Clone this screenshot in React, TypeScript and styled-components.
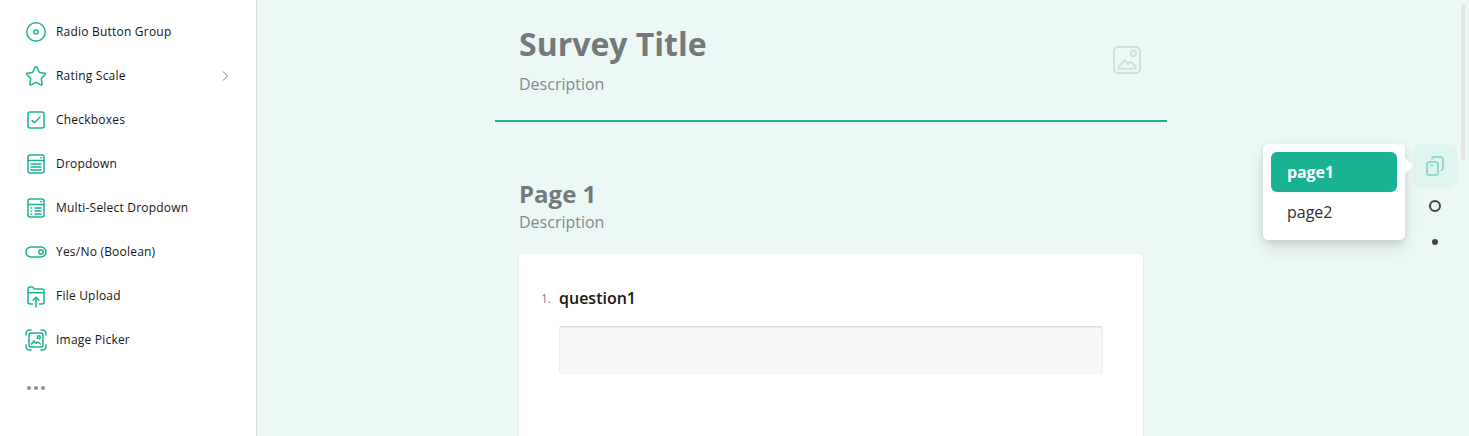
import React from "react";
import styled, { createGlobalStyle } from "styled-components";

const GlobalStyle = createGlobalStyle`
  * { box-sizing: border-box; }
  html, body { margin: 0; height: 100%; overflow: hidden; }
  body { font-family: "Open Sans", "Noto Sans", sans-serif; }
`;

const Layout = styled.div`
  display: flex;
  height: 436px;
  overflow: hidden;
  background: #ebf8f6;
`;

const Toolbox = styled.aside`
  flex: none;
  width: 257px;
  padding: 12px 20px 0 20px;
  background: #fff;
  border-right: 1px solid #d6dedd;
`;

const ToolItem = styled.div`
  display: flex;
  align-items: center;
  height: 40px;
  margin-bottom: 4px;
  padding: 0 3px 0 4px;
`;

const ToolIcon = styled.svg`
  flex: none;
  width: 24px;
  height: 24px;
  fill: none;
  stroke: #19b394;
  stroke-width: 1.5;
  stroke-linecap: round;
  stroke-linejoin: round;
`;

const ToolLabel = styled.span`
  flex: 1;
  margin-left: 8px;
  font-size: 12px;
  line-height: 16px;
  letter-spacing: 0.21px;
  color: #161616;
`;

const Chevron = styled.svg`
  width: 16px;
  height: 16px;
  fill: none;
  stroke: #808080;
`;

const MoreButton = styled.div`
  display: flex;
  gap: 3px;
  padding: 22px 7px 10px;
`;

const MoreDot = styled.i`
  width: 4px;
  height: 4px;
  border-radius: 50%;
  background: #909090;
`;

const Designer = styled.main`
  flex: 1;
  display: flex;
  flex-direction: column;
  align-items: center;
`;

const SurveyHeader = styled.header`
  display: flex;
  justify-content: space-between;
  flex: none;
  width: 672px;
  height: 122px;
  padding: 22px 24px 0;
  border-bottom: 2px solid #19b394;
`;

const SurveyTitle = styled.h1`
  margin: 0;
  font-size: 32px;
  line-height: 44px;
  font-weight: 700;
  color: #747a79;
`;

const Description = styled.p`
  margin: 0;
  font-size: 16px;
  line-height: 24px;
  font-weight: 400;
  color: #848b8a;
`;

const HeaderDescription = styled(Description)`
  margin-top: 6px;
`;

const LogoPlaceholder = styled.svg`
  width: 32px;
  height: 32px;
  margin-top: 22px;
  fill: none;
  stroke: #d3dfdd;
  stroke-width: 2;
  stroke-linejoin: round;
`;

const SurveyPage = styled.section`
  width: 624px;
  padding-top: 56px;
`;

const PageTitle = styled.h2`
  margin: 0;
  font-size: 24px;
  line-height: 32px;
  font-weight: 700;
  color: #747a79;
`;

const QuestionCard = styled.article`
  height: 240px;
  margin-top: 20px;
  padding: 32px 40px 0 22px;
  background: #fff;
  border-radius: 4px;
  box-shadow: 0 1px 2px rgba(0, 0, 0, 0.15);
`;

const QuestionTitle = styled.div`
  display: flex;
  align-items: center;
  height: 24px;
`;

const QuestionNumber = styled.span`
  width: 18px;
  padding-top: 1px;
  font-size: 12px;
  line-height: 16px;
  color: #858585;
`;

const QuestionName = styled.span`
  font-size: 16px;
  line-height: 24px;
  font-weight: 600;
  color: #161616;
`;

const AnswerField = styled.div`
  height: 48px;
  margin: 16px 0 0 18px;
  background: #f8f8f8;
  border-radius: 4px;
  box-shadow: inset 0 1px 2px rgba(0, 0, 0, 0.15);
`;

const Navigator = styled.nav`
  position: relative;
  flex: none;
  display: flex;
  flex-direction: column;
  align-items: center;
  width: 44px;
  margin: 144px 12px 0 8px;
`;

const PagesButton = styled.div`
  display: flex;
  align-items: center;
  justify-content: center;
  width: 44px;
  height: 44px;
  border-radius: 8px;
  background: #e0f5f0;
`;

const PagesIcon = styled.svg`
  width: 24px;
  height: 24px;
  fill: none;
  stroke: #94dacb;
  stroke-width: 2;
  stroke-linecap: round;
  stroke-linejoin: round;
`;

const PageMarker = styled.i<{ $current?: boolean }>`
  width: ${(p) => (p.$current ? 12 : 6)}px;
  height: ${(p) => (p.$current ? 12 : 6)}px;
  margin-top: ${(p) => (p.$current ? 12 : 27)}px;
  border-radius: 50%;
  border: 2px solid #404545;
  background: ${(p) => (p.$current ? "transparent" : "#404545")};
`;

const PagesMenu = styled.div`
  position: absolute;
  top: 0;
  right: 52px;
  width: 142px;
  height: 96px;
  padding: 8px;
  border-radius: 5px;
  background: #fff;
  box-shadow: 0 8px 16px rgba(0, 0, 0, 0.1), 0 2px 6px rgba(0, 0, 0, 0.1);

  &::after {
    content: "";
    position: absolute;
    left: 142px;
    top: 14px;
    border: 8px solid transparent;
    border-right-width: 0;
    border-left-color: #fff;
  }
`;

const PagesMenuItem = styled.div<{ $selected?: boolean }>`
  height: 40px;
  padding: 8px 16px;
  border-radius: 6px;
  font-size: 16px;
  line-height: 24px;
  letter-spacing: ${(p) => (p.$selected ? "-0.15px" : "normal")};
  font-weight: ${(p) => (p.$selected ? 700 : 400)};
  color: ${(p) => (p.$selected ? "#fff" : "#303030")};
  background: ${(p) => (p.$selected ? "#19b394" : "transparent")};
`;

const ScrollThumb = styled.div`
  position: absolute;
  left: 1461px;
  top: 4px;
  width: 4px;
  height: 156px;
  border-radius: 2px;
  background: #e4e6e6;
`;

const tools: { label: string; icon: React.ReactNode; submenu?: boolean }[] = [
  {
    label: "Radio Button Group",
    icon: (
      <>
        <circle cx="12" cy="12" r="9.2" />
        <circle cx="12" cy="12" r="2" />
      </>
    ),
  },
  {
    label: "Rating Scale",
    submenu: true,
    icon: (
      <path d="M11.2 3 9 7.8Q8.8 8.3 8.2 8.4L3.3 9.2Q2 9.6 2.9 10.6L6.3 14Q6.8 14.5 6.7 15.1L5.9 20Q5.9 21.5 7.2 20.9L11.4 18.7Q12 18.4 12.6 18.7L16.8 20.9Q18.1 21.5 18.1 20L17.3 15.1Q17.2 14.5 17.7 14L21.1 10.6Q22 9.6 20.7 9.2L15.8 8.4Q15.2 8.3 15 7.8L12.8 3Q12 2 11.2 3Z" />
    ),
  },
  {
    label: "Checkboxes",
    icon: (
      <>
        <rect x="4" y="4" width="16" height="16" rx="2" />
        <path d="m8 12.4 2.5 2.4L16 9" />
      </>
    ),
  },
  {
    label: "Dropdown",
    icon: (
      <>
        <rect x="4" y="3" width="16" height="18" rx="2" />
        <path d="M4 8.500h16M16.800 5.700h.5M7 12h10M7 15h10M7 18h10" />
      </>
    ),
  },
  {
    label: "Multi-Select Dropdown",
    icon: (
      <>
        <rect x="4" y="3" width="16" height="18" rx="2" />
        <path d="M4 8.500h16M16.800 5.700h.5M11 12h6M11 15h6M11 18h6M7.200 12h.5M7.200 15h.5M7.200 18h.5" />
      </>
    ),
  },
  {
    label: "Yes/No (Boolean)",
    icon: (
      <>
        <rect x="2" y="7" width="20" height="10" rx="5" />
        <circle cx="17" cy="12" r="2.2" />
      </>
    ),
  },
  {
    label: "File Upload",
    icon: (
      <>
        <path d="M8.500 20H6q-2 0-2-2V5q0-2 2-2h2q1 0 1.400 1t1.400 1H18q2 0 2 2v11q0 2-2 2h-2.500M4 8.700h16" />
        <path d="M12 23v-9.500M9 16.200l3-3 3 3" />
      </>
    ),
  },
  {
    label: "Image Picker",
    icon: (
      <>
        <rect x="5" y="5" width="14" height="14" rx="2" />
        <circle cx="14.800" cy="9.300" r="1.500" />
        <path d="m7.500 16 2.500-3 2 2.300 1.600-1.300 2.700 2" />
        <path d="M2 7V6q0-4 4-4h1M17 2h1q4 0 4 4v1M22 17v1q0 4-4 4h-1M7 22H6q-4 0-4-4v-1" />
      </>
    ),
  },
];

export default function App() {
  return (
    <Layout>
      <GlobalStyle />
      <Toolbox>
        {tools.map((tool) => (
          <ToolItem key={tool.label}>
            <ToolIcon viewBox="0 0 24 24">{tool.icon}</ToolIcon>
            <ToolLabel>{tool.label}</ToolLabel>
            {tool.submenu && (
              <Chevron viewBox="0 0 16 16">
                <path d="m6 3.5 4.5 4.5L6 12.5" />
              </Chevron>
            )}
          </ToolItem>
        ))}
        <MoreButton>
          <MoreDot />
          <MoreDot />
          <MoreDot />
        </MoreButton>
      </Toolbox>

      <Designer>
        <SurveyHeader>
          <div>
            <SurveyTitle>Survey Title</SurveyTitle>
            <HeaderDescription>Description</HeaderDescription>
          </div>
          <LogoPlaceholder viewBox="0 0 32 32">
            <rect x="3" y="3" width="26" height="26" rx="4" />
            <circle cx="22.5" cy="9.5" r="2.7" />
            <path d="m7.5 23.2 5-6q1-1 2 0l2.6 2.8 1.8-1.6q1-.8 2 0l3.7 4.6q.8 1.8-1 1.8H8.3q-1.8 0-.8-1.6Z" />
          </LogoPlaceholder>
        </SurveyHeader>
        <SurveyPage>
          <PageTitle>Page 1</PageTitle>
          <Description>Description</Description>
          <QuestionCard>
            <QuestionTitle>
              <QuestionNumber>1.</QuestionNumber>
              <QuestionName>question1</QuestionName>
            </QuestionTitle>
            <AnswerField />
          </QuestionCard>
        </SurveyPage>
      </Designer>

      <Navigator>
        <PagesButton>
          <PagesIcon viewBox="0 0 24 24">
            <rect x="4" y="8" width="11" height="13" rx="2.5" />
            <path d="M8 11.5h1.5M9 4.5Q9.500 3 11 3h6.500Q20 3 20 5.500v8.500q0 1.700-1.500 2" />
          </PagesIcon>
        </PagesButton>
        <PageMarker $current />
        <PageMarker />
        <PagesMenu>
          <PagesMenuItem $selected>page1</PagesMenuItem>
          <PagesMenuItem>page2</PagesMenuItem>
        </PagesMenu>
      </Navigator>
      <ScrollThumb />
    </Layout>
  );
}
